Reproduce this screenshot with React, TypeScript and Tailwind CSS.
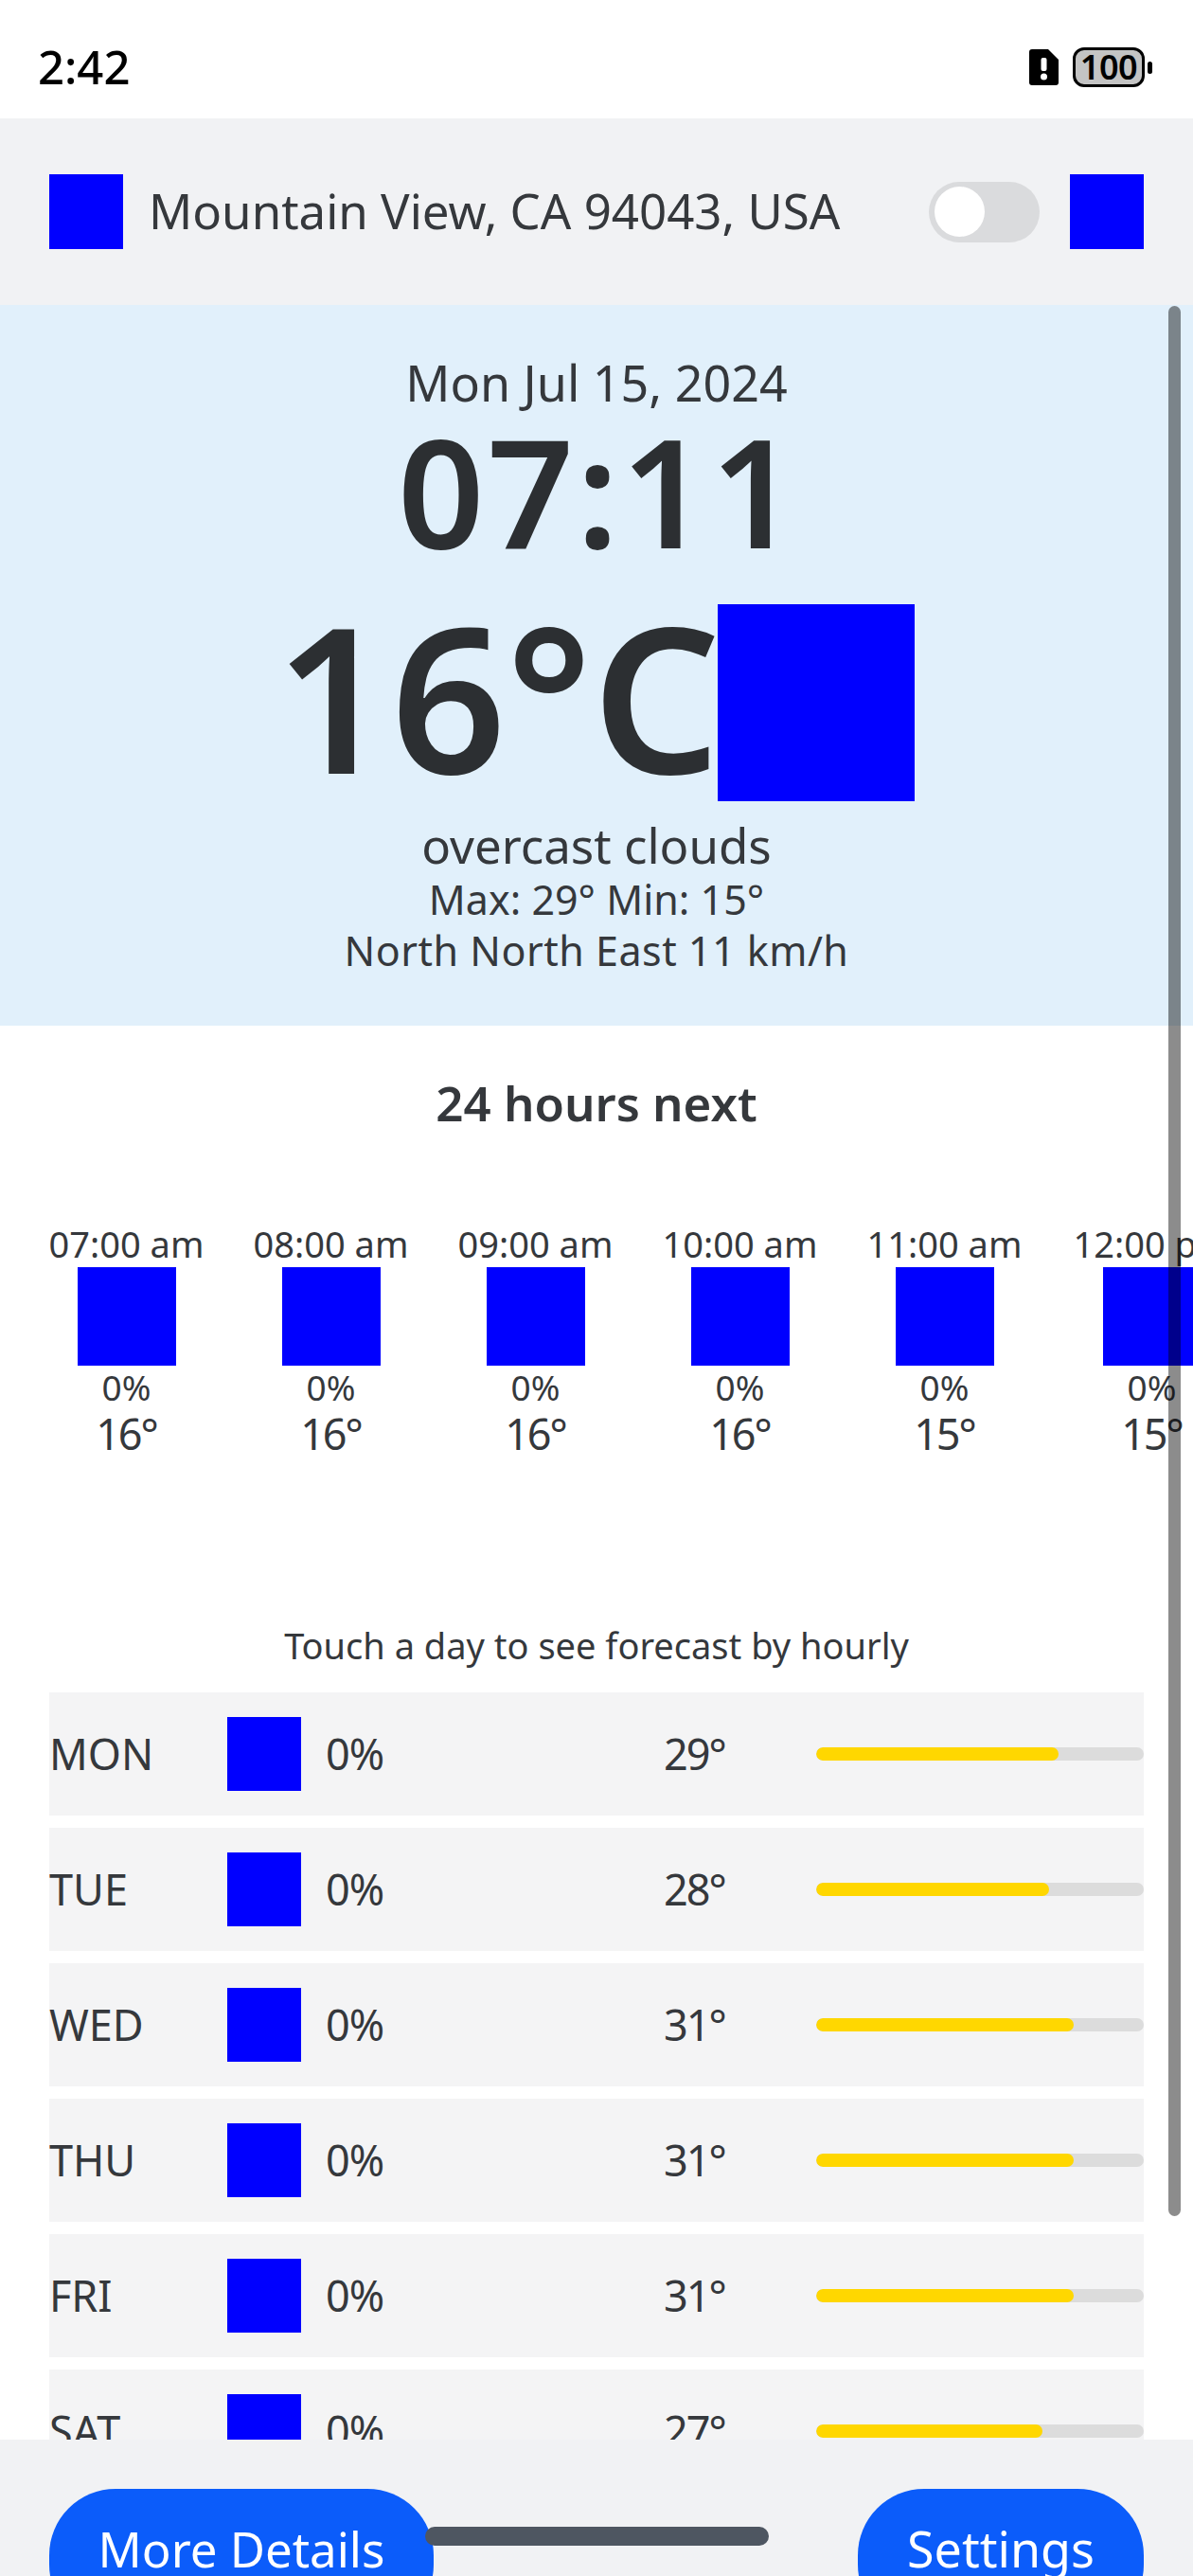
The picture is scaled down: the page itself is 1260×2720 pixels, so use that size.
const font = { fontFamily: "'Noto Sans', Inter, sans-serif" };

const hours = [
  ["07:00 am", "0%", "16°"],
  ["08:00 am", "0%", "16°"],
  ["09:00 am", "0%", "16°"],
  ["10:00 am", "0%", "16°"],
  ["11:00 am", "0%", "15°"],
  ["12:00 pm", "0%", "15°"],
];

const days = [
  ["MON", "29°", 74],
  ["TUE", "28°", 71],
  ["WED", "31°", 78.5],
  ["THU", "31°", 78.5],
  ["FRI", "31°", 78.5],
  ["SAT", "27°", 69],
] as const;

function Square({ className }: { className: string }) {
  return <div className={`bg-[#0000ff] shrink-0 ${className}`} />;
}

export default function App() {
  return (
    <div
      className="w-[1260px] h-[2720px] flex flex-col overflow-hidden bg-white text-[#35383c] font-normal"
      style={font}
    >
      {/* status bar */}
      <div className="h-[125px] shrink-0 flex items-start justify-between pl-[40px] pr-[43px] pt-[40px] bg-white">
        <span className="text-[49px] leading-[60px] font-medium text-black">2:42</span>
        <div className="flex items-center gap-[15px] pt-[10px]">
          <svg width="31" height="38" viewBox="0 0 31 38">
            <path
              d="M3 0H20L31 11V35a3 3 0 0 1-3 3H3a3 3 0 0 1-3-3V3a3 3 0 0 1 3-3Z"
              fill="#000"
            />
            <rect x="12.5" y="9" width="6" height="14" rx="2" fill="#fff" />
            <circle cx="15.5" cy="29" r="3.5" fill="#fff" />
          </svg>
          <div className="flex items-center gap-[3px]">
            <div className="w-[76px] h-[42px] rounded-[12px] border-[3px] border-black bg-[#c4c4c4] flex items-center justify-center text-[36px] leading-none font-semibold text-black tracking-[-0.5px]">
              100
            </div>
            <div className="w-[5px] h-[13px] rounded-full bg-black" />
          </div>
        </div>
      </div>

      {/* location header */}
      <div className="h-[197px] shrink-0 bg-[#f1f2f4] flex items-center pl-[52px] pr-[52px]">
        <Square className="w-[78px] h-[79px]" />
        <span className="ml-[27px] mb-[2px] text-[51px] leading-none flex-1 whitespace-nowrap">Mountain View, CA 94043, USA</span>
        <div className="w-[117px] h-[64px] rounded-full bg-[#dadbdd] flex items-center pl-[6px] mr-[32px]">
          <div className="w-[53px] h-[53px] rounded-full bg-white" />
        </div>
        <Square className="w-[78px] h-[79px]" />
      </div>

      {/* scrolling body */}
      <div className="relative flex-1 overflow-hidden">
        <div className="h-[761px] bg-[#e1f0fb] flex flex-col items-center pt-[54px]">
          <div className="text-[52px] leading-[56px]">Mon Jul 15, 2024</div>
          <div className="text-[160px] leading-[170px] font-semibold tracking-[3px] ml-[5px] text-[#2c2f32]">07:11</div>
          <div className="flex items-start mt-[36px] pr-[3px] text-[#2c2f32]">
            <span className="text-[213px] leading-[192px] font-semibold">16°C</span>
            <Square className="w-[208px] h-[208px] ml-[-3px]" />
          </div>
          <div className="text-[51px] leading-[60px] mt-[16px]">overcast clouds</div>
          <div className="text-[43px] leading-[52px] mt-[2px]">Max: 29° Min: 15°</div>
          <div className="text-[43px] leading-[52px] mt-[2px] tracking-[0.5px]">North North East 11 km/h</div>
        </div>

        <div className="h-[162px] flex items-center justify-center text-[51px] font-semibold">24 hours next</div>

        <div className="flex gap-[53px] pl-[52px] whitespace-nowrap mt-[44px]">
          {hours.map(([time, pct, temp], i) => (
            <div key={time} className={`shrink-0 flex flex-col items-center ${i === 5 ? "w-[169px]" : "w-[163px]"}`}>
              <div className="text-[38px] leading-[49px]">{time}</div>
              <Square className="w-[104px] h-[104px]" />
              <div className="text-[37px] leading-[44px] mt-[1px]">{pct}</div>
              <div className="text-[45px] leading-[50px] mt-[2px] tracking-[-2px]">{temp}</div>
            </div>
          ))}
        </div>

        <div className="text-center text-[38px] leading-[50px] mt-[173px] mb-[25px]">Touch a day to see forecast by hourly</div>

        <div className="flex flex-col gap-[13px] px-[52px]">
          {days.map(([day, temp, value]) => (
            <div key={day} className="h-[130px] bg-[#f4f4f5] flex items-center text-[45px]">
              <span className="w-[188px]">{day}</span>
              <Square className="w-[78px] h-[78px]" />
              <span className="w-[383px] pl-[26px] tracking-[-1px]">0%</span>
              <span className="w-[161px] tracking-[-2px]">{temp}</span>
              <div className="flex-1 h-[14px] rounded-full bg-[#dcdcdc] overflow-hidden">
                <div className="h-full rounded-full bg-[#ffd700]" style={{ width: `${value}%` }} />
              </div>
            </div>
          ))}
        </div>

        {/* scrollbar */}
        <div className="absolute top-[1px] left-[1234px] w-[13px] h-[2017px] rounded-full bg-black/45" />
      </div>

      {/* bottom bar */}
      <div className="relative h-[144px] shrink-0 bg-[#f1f2f4] flex items-start justify-between px-[52px] pt-[52px]">
        <div className="w-[406px] h-[150px] rounded-[70px] bg-[#0b5cfa] text-white text-[51px] font-normal text-center pt-[33px] leading-[60px]">
          More Details
        </div>
        <div className="w-[302px] h-[150px] rounded-[70px] bg-[#0b5cfa] text-white text-[52px] font-normal text-center pt-[33px] leading-[60px]">
          Settings
        </div>
        <div className="absolute left-[449px] top-[92px] w-[363px] h-[20px] rounded-full bg-[#4e5661]" />
      </div>
    </div>
  );
}
